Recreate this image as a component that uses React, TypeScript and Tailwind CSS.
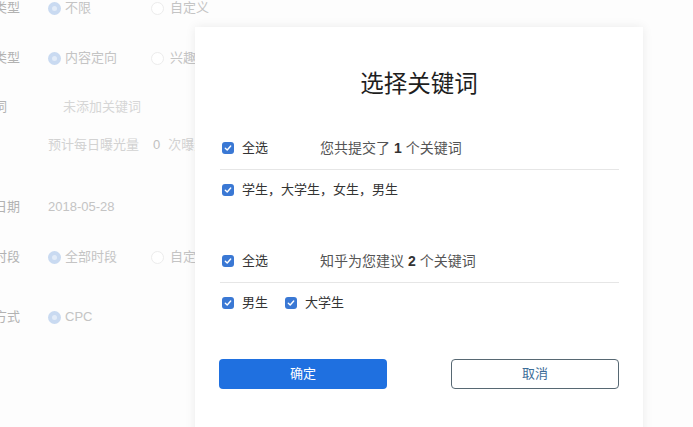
import React from "react";

const font = { fontFamily: '"Liberation Sans", "Noto Sans CJK SC", sans-serif' };

function Radio({ on }: { on?: boolean }) {
  return on ? (
    <span className="w-[13px] h-[13px] rounded-full bg-[#c9daf1] flex items-center justify-center shrink-0">
      <span className="w-[5px] h-[5px] rounded-full bg-[#e3ecf8]" />
    </span>
  ) : (
    <span className="w-[13px] h-[13px] rounded-full border border-[#ececec] bg-white shrink-0" />
  );
}

function Check() {
  return (
    <span className="w-[12px] h-[12px] rounded-[3px] bg-[#3a78d4] flex items-center justify-center shrink-0">
      <svg width="8" height="8" viewBox="0 0 8 8" fill="none">
        <path d="M1.3 4.2 L3.2 6 L6.7 2" stroke="white" strokeWidth="1.4" strokeLinecap="round" strokeLinejoin="round" />
      </svg>
    </span>
  );
}

function BgRow({ label, children, h }: { label: string; children: React.ReactNode; h: string }) {
  return (
    <div className={`flex items-center ${h}`}>
      <div className="-ml-[32px] w-[52px] shrink-0 whitespace-nowrap text-[#b2b2b2]">{label}</div>
      <div className="ml-[28px] flex items-center text-[#c4c4c4] whitespace-nowrap">{children}</div>
    </div>
  );
}

export default function App() {
  return (
    <div className="relative w-[693px] h-[427px] overflow-hidden bg-[#fdfdfd] text-[13px]" style={font}>
      {/* faded background form */}
      <div className="flex flex-col -mt-[3px]">
        <BgRow label="广告类型" h="h-[22px]">
          <Radio on />
          <span className="ml-[4px] w-[86px]">不限</span>
          <Radio />
          <span className="ml-[6px]">自定义</span>
        </BgRow>
        <div className="h-[28px]" />
        <BgRow label="定向类型" h="h-[22px]">
          <Radio on />
          <span className="ml-[4px] w-[86px]">内容定向</span>
          <Radio />
          <span className="ml-[6px]">兴趣</span>
        </BgRow>
        <div className="h-[27px]" />
        <BgRow label="关键词" h="h-[22px]">
          <span className="ml-[15px] text-[#d6d6d6]">未添加关键词</span>
        </BgRow>
        <div className="h-[16px]" />
        <BgRow label="" h="h-[22px]">
          <span className="text-[#d2d2d2]">预计每日曝光量</span>
          <span className="ml-[14px] text-[#c0c0c0]">0</span>
          <span className="ml-[8px] text-[#d2d2d2]">次曝光</span>
        </BgRow>
        <div className="h-[40px]" />
        <BgRow label="投放日期" h="h-[22px]">
          <span>2018-05-28</span>
        </BgRow>
        <div className="h-[28px]" />
        <BgRow label="投放时段" h="h-[22px]">
          <Radio on />
          <span className="ml-[4px] w-[86px]">全部时段</span>
          <Radio />
          <span className="ml-[6px]">自定义</span>
        </BgRow>
        <div className="h-[38px]" />
        <BgRow label="出价方式" h="h-[22px]">
          <Radio on />
          <span className="ml-[4px]">CPC</span>
        </BgRow>
      </div>

      {/* modal */}
      <div className="absolute left-[195px] top-[27px] w-[448px] h-[420px] bg-white shadow-[0_0_10px_rgba(0,0,0,0.08)] px-[24px] flex flex-col">
        <div className="pt-[42px] text-center text-[23.5px] leading-[30px] text-[#1e1e1e]">选择关键词</div>

        <div className="mt-[38px] h-[22px] flex items-center">
          <span className="ml-[3px]"><Check /></span>
          <span className="ml-[8px] w-[78px] text-[#333]">全选</span>
          <span className="text-[#555] text-[14px]">
            您共提交了<b className="mx-[4px] font-bold text-[#333]">1</b>个关键词
          </span>
        </div>
        <div className="mt-[10px] h-px bg-[#e6e6e6] ml-[1px]" />
        <div className="mt-[9px] h-[22px] flex items-center">
          <span className="ml-[3px]"><Check /></span>
          <span className="ml-[8px] text-[#333]">学生，大学生，女生，男生</span>
        </div>

        <div className="mt-[49px] h-[22px] flex items-center">
          <span className="ml-[3px]"><Check /></span>
          <span className="ml-[8px] w-[78px] text-[#333]">全选</span>
          <span className="text-[#555] text-[14px]">
            知乎为您建议<b className="mx-[4px] font-bold text-[#333]">2</b>个关键词
          </span>
        </div>
        <div className="mt-[10px] h-px bg-[#e6e6e6] ml-[1px]" />
        <div className="mt-[9px] h-[22px] flex items-center">
          <span className="ml-[3px]"><Check /></span>
          <span className="ml-[8px] text-[#333]">男生</span>
          <span className="ml-[17px]"><Check /></span>
          <span className="ml-[8px] text-[#333]">大学生</span>
        </div>

        <div className="mt-[45px] flex justify-between">
          <button className="w-[168px] h-[30px] rounded-[4px] bg-[#1f70e0] text-white text-[13px]">确定</button>
          <button className="w-[168px] h-[30px] rounded-[4px] border border-[#576873] bg-white text-[#3c6c98] text-[13px]">取消</button>
        </div>
      </div>
    </div>
  );
}
